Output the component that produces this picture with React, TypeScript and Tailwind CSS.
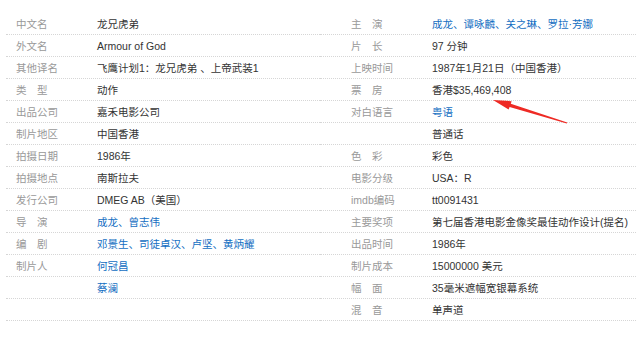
import React from 'react';

type Item = { label?: string; value: string; link?: boolean };

const leftItems: Item[] = [
  { label: '中文名', value: '龙兄虎弟' },
  { label: '外文名', value: 'Armour of God' },
  { label: '其他译名', value: '飞鹰计划1：龙兄虎弟 、上帝武装1' },
  { label: '类　型', value: '动作' },
  { label: '出品公司', value: '嘉禾电影公司' },
  { label: '制片地区', value: '中国香港' },
  { label: '拍摄日期', value: '1986年' },
  { label: '拍摄地点', value: '南斯拉夫' },
  { label: '发行公司', value: 'DMEG AB（美国）' },
  { label: '导　演', value: '成龙、曾志伟', link: true },
  { label: '编　剧', value: '邓景生、司徒卓汉、卢坚、黄炳耀', link: true },
  { label: '制片人', value: '何冠昌', link: true },
  { value: '蔡澜', link: true },
  { value: '' },
];

const rightItems: Item[] = [
  { label: '主　演', value: '成龙、谭咏麟、关之琳、罗拉·芳娜', link: true },
  { label: '片　长', value: '97 分钟' },
  { label: '上映时间', value: '1987年1月21日（中国香港）' },
  { label: '票　房', value: '香港$35,469,408' },
  { label: '对白语言', value: '粤语', link: true },
  { value: '普通话' },
  { label: '色　彩', value: '彩色' },
  { label: '电影分级', value: 'USA：R' },
  { label: 'imdb编码', value: 'tt0091431' },
  { label: '主要奖项', value: '第七届香港电影金像奖最佳动作设计(提名)' },
  { label: '出品时间', value: '1986年' },
  { label: '制片成本', value: '15000000 美元' },
  { label: '幅　面', value: '35毫米遮幅宽银幕系统' },
  { label: '混　音', value: '单声道' },
];

function InfoRow({ item, right }: { item: Item; right?: boolean }) {
  return (
    <div
      className={`flex h-[22px] items-center border-b border-dotted border-[#d6d6d6] pt-[2px] ${
        right ? 'pl-[31px]' : 'pl-[10px]'
      }`}
    >
      <div className="w-[81px] shrink-0 text-[#999]">{item.label}</div>
      <div className={`whitespace-nowrap ${item.link ? 'text-[#136ec2]' : 'text-[#333]'}`}>
        {item.value}
      </div>
    </div>
  );
}

function Arrow() {
  return (
    <svg className="pointer-events-none absolute left-0 top-0" width="640" height="342">
      <polygon
        fill="#ee2a24"
        points="493,100 511.6,101.2 510.8,103.7 567.2,122.5 566.8,123.5 509.6,106.9 508.6,109.4"
      />
    </svg>
  );
}

export default function App() {
  return (
    <div
      className="relative h-[342px] w-[640px] overflow-hidden bg-white pt-[13px] text-[10.5px] leading-none"
      style={{ fontFamily: '"Liberation Sans", Arial, "Noto Sans CJK SC", sans-serif' }}
    >
      <div className="ml-[6px] grid w-[630px] grid-cols-[314px_316px]">
        <div>
          {leftItems.map((item, i) => (
            <InfoRow key={i} item={item} />
          ))}
        </div>
        <div>
          {rightItems.map((item, i) => (
            <InfoRow key={i} item={item} right />
          ))}
        </div>
      </div>
      <Arrow />
    </div>
  );
}
